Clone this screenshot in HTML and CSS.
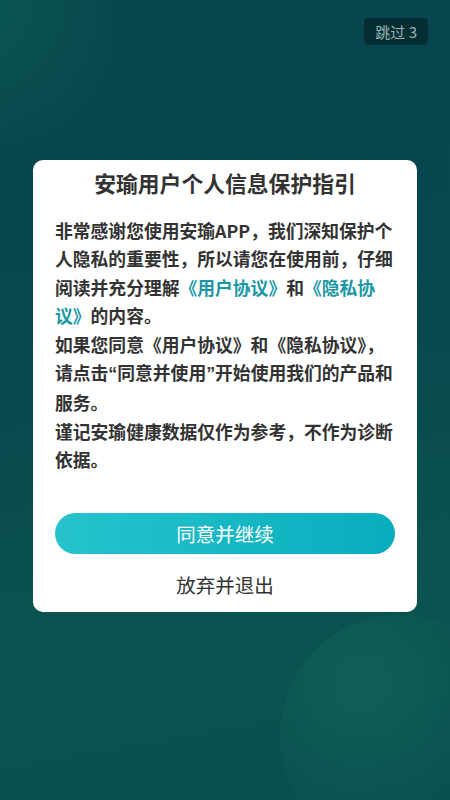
FILE: index.html
```html
<!DOCTYPE html>
<html lang="zh-CN">
<head>
  <meta charset="UTF-8">
  <meta name="viewport" content="width=device-width, initial-scale=1.0">
  <title>安瑜用户个人信息保护指引</title>
  <link rel="stylesheet" href="styles.css">
</head>
<body>
  <div class="screen">
    <!-- background blobs -->
    <div class="blob blob-top"></div>
    <div class="blob blob-bottom"></div>

    <div class="topbar">
      <span class="skip">跳过 3</span>
    </div>

    <div class="dialog">
      <h1 class="title">安瑜用户个人信息保护指引</h1>
      <div class="content">
        <p>非常感谢您使用安瑜APP，我们深知保护个人隐私的重要性，所以请您在使用前，仔细阅读并充分理解<a class="link" href="#">《用户协议》</a>和<a class="link" href="#">《隐私协议》</a>的内容。</p>
        <p>如果您同意《用户协议》和《隐私协议》，请点击<span class="q">“</span>同意并使用<span class="q">”</span>开始使用我们的产品和服务。</p>
        <p>谨记安瑜健康数据仅作为参考，不作为诊断依据。</p>
      </div>
      <button class="agree">同意并继续</button>
      <button class="quit">放弃并退出</button>
    </div>
  </div>
</body>
</html>
```

FILE: styles.css
```css
/* General */
html, body {
  margin: 0;
  padding: 0;
}

body {
  font-family: "Noto Sans CJK SC", "Noto Sans", sans-serif;
  color: #333;
}

.screen {
  position: relative;
  width: 450px;
  height: 800px;
  overflow: hidden;
  background: linear-gradient(170deg, #07464e 0%, #08474f 40%, #0b5350 75%, #0a4e4f 100%);
}

/* soft circles in the background */
.blob {
  position: absolute;
  border-radius: 50%;
}

.blob-top {
  left: -120px;
  top: -90px;
  width: 235px;
  height: 230px;
  background: radial-gradient(circle at 40% 40%, rgba(14, 100, 90, 0.55), rgba(10, 80, 80, 0.25) 70%, rgba(10, 80, 80, 0) 100%);
}

.blob-bottom {
  left: 280px;
  top: 615px;
  width: 240px;
  height: 240px;
  background: radial-gradient(circle at 35% 30%, rgba(20, 110, 95, 0.5), rgba(8, 70, 75, 0.3) 75%, rgba(8, 70, 75, 0) 100%);
}

.topbar {
  position: relative;
  display: flex;
  justify-content: flex-end;
  padding: 18px 22px 0 0;
}

.skip {
  display: inline-block;
  height: 27px;
  line-height: 27px;
  padding: 0 11px;
  font-size: 15px;
  color: #9fb1b1;
  background: rgba(0, 20, 22, 0.45);
  border-radius: 4px;
}

/* Dialog */
.dialog {
  position: relative;
  margin: 115px 33px 0;
  background: #fff;
  border-radius: 10px;
  padding: 9px 22px 13px;
  display: flex;
  flex-direction: column;
}

.title {
  margin: 0;
  text-align: center;
  font-size: 21.8px;
  line-height: 28px;
  font-weight: 700;
  color: #333;
}

.content {
  margin-top: 19px;
  font-size: 17.8px;
  line-height: 28.4px;
  font-weight: 700;
  color: #333;
}

.content p {
  margin: 0;
}

.q {
  font-family: "Liberation Sans", sans-serif;
}

.link {
  color: #1b97a5;
  text-decoration: none;
}

/* Buttons */
button {
  font-family: inherit;
  border: none;
  cursor: pointer;
}

.agree {
  margin-top: 39px;
  height: 41px;
  border-radius: 21px;
  background: linear-gradient(90deg, #26c3cc, #08adbd);
  color: #fff;
  font-size: 19.5px;
}

.quit {
  margin-top: 15px;
  height: 30px;
  background: none;
  color: #333;
  font-size: 19.5px;
}
```
